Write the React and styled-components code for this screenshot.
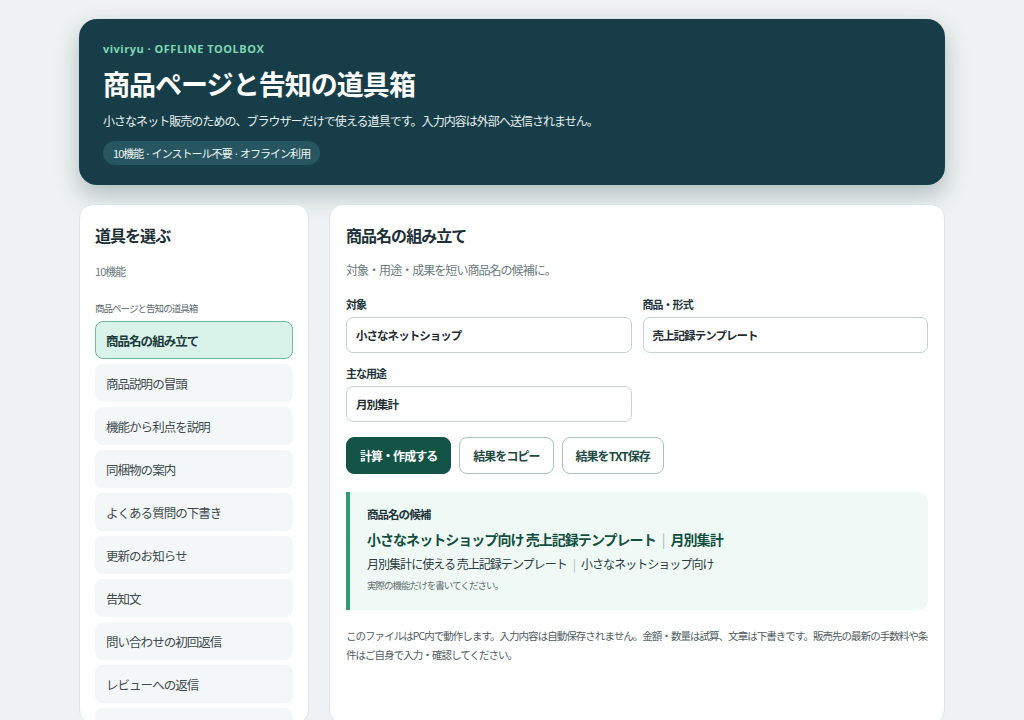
import React from "react";
import styled, { createGlobalStyle } from "styled-components";

const Global = createGlobalStyle`
  html, body { margin: 0; background: #eef2f2; }
  body { font-family: "Noto Sans CJK JP", "Noto Sans", sans-serif; color: #1f2d33; letter-spacing: -0.06em; }
  * { box-sizing: border-box; }
`;

const Page = styled.div`
  width: 866px; margin: 0 auto; padding: 19px 0 0;
  display: flex; flex-direction: column; gap: 19px;
`;
const Hero = styled.header`
  background: #173e48; border-radius: 18px; padding: 22px 24px 20px;
  box-shadow: 0 10px 24px rgba(20,50,60,0.28); color: #fff;
`;
const Eyebrow = styled.div`
  font-family: "Open Sans", sans-serif; font-weight: 700; font-size: 11px;
  letter-spacing: 0.5px; color: #7fd7b4;
`;
const Title = styled.h1`
  margin: 10px 0 0; font-size: 27px; font-weight: 700; line-height: 1.35;
`;
const Lead = styled.p`margin: 10px 0 0; font-size: 12px; color: #e6eff0;`;
const Pill = styled.span`
  display: inline-block; margin-top: 12px; background: #275660; color: #eef6f5;
  font-size: 11px; padding: 4px 10px; border-radius: 12px;
`;
const Body = styled.div`display: grid; grid-template-columns: 230px 1fr; gap: 20px;`;
const Card = styled.section`
  background: #fff; border: 1px solid #dde6e6; border-radius: 14px; height: 520px; overflow: hidden;
`;
const Side = styled(Card)`padding: 18px 15px;`;
const H2 = styled.h2`margin: 0; font-size: 16px; font-weight: 700; color: #1b2f36;`;
const Muted = styled.div`font-size: ${p => p.$fs || 11}px; color: #6c7a7e; margin-top: ${p => p.$mt}px;`;
const Group = styled.div`font-size: 9.5px; color: #5c6a6e; margin: 22px 0 6px;`;
const Nav = styled.div`display: flex; flex-direction: column; gap: 5px;`;
const Item = styled.div`
  height: 38px; border-radius: 8px; padding: 0 10px; display: flex; align-items: center;
  font-size: 12.5px; color: ${p => p.$on ? "#1b3a3a" : "#3e4b4f"}; font-weight: ${p => p.$on ? 700 : 400};
  background: ${p => p.$on ? "#d9f2ea" : "#f4f7f7"};
  border: 1px solid ${p => p.$on ? "#6cbca0" : "transparent"};
`;
const Main = styled(Card)`padding: 18px 16px;`;
const Fields = styled.div`display: grid; grid-template-columns: 1fr 1fr; gap: 12px 11px; margin-top: 18px;`;
const Field = styled.label`display: flex; flex-direction: column; gap: 5px;`;
const Label = styled.span`font-size: 11px; font-weight: 700; color: #22343a;`;
const Input = styled.div`
  height: 36px; border: 1px solid #c5d2d2; border-radius: 7px; padding: 0 9px;
  display: flex; align-items: center; font-size: 11.5px; font-weight: 700; color: #1f2d33;
`;
const Buttons = styled.div`display: flex; gap: 8px; margin-top: 15px;`;
const Btn = styled.button`
  height: 37px; padding: 0 13px; border-radius: 8px; font-family: inherit; letter-spacing: inherit;
  font-size: 12px; font-weight: 700;
  background: ${p => p.$primary ? "#145447" : "#fff"}; color: ${p => p.$primary ? "#fff" : "#1f4a44"};
  border: 1px solid ${p => p.$primary ? "#145447" : "#a9c3bd"};
`;
const Result = styled.div`
  margin-top: 18px; background: #effaf6; border-left: 4px solid #2e9a77; border-radius: 0 10px 10px 0;
  padding: 14px 17px 18px;
`;
const RTitle = styled.div`font-size: 11.5px; font-weight: 700; color: #22343a;`;
const RMain = styled.div`margin-top: 7px; font-size: 14px; font-weight: 700; color: #134f40;`;
const Sep = styled.span`color: #a8b8b4; font-weight: 400; margin: 0 6px;`;
const RSub = styled.div`margin-top: 6px; font-size: 12px; color: #2a3a3f;`;
const RNote = styled.div`margin-top: 6px; font-size: 9.5px; color: #5f6d70;`;
const Foot = styled.p`margin: 17px 0 0; font-size: 10.5px; line-height: 1.75; color: #4f5d61;`;

const items = ["商品名の組み立て","商品説明の冒頭","機能から利点を説明","同梱物の案内","よくある質問の下書き","更新のお知らせ","告知文","問い合わせの初回返信","レビューへの返信","文章のチェックリスト"];

export default function App() {
  return (
    <Page>
      <Global />
      <Hero>
        <Eyebrow>viviryu · OFFLINE TOOLBOX</Eyebrow>
        <Title>商品ページと告知の道具箱</Title>
        <Lead>小さなネット販売のための、ブラウザーだけで使える道具です。入力内容は外部へ送信されません。</Lead>
        <Pill>10機能 · インストール不要 · オフライン利用</Pill>
      </Hero>
      <Body>
        <Side>
          <H2>道具を選ぶ</H2>
          <Muted $mt={16}>10機能</Muted>
          <Group>商品ページと告知の道具箱</Group>
          <Nav>{items.map((t, i) => <Item key={t} $on={i === 0}>{t}</Item>)}</Nav>
        </Side>
        <Main>
          <H2>商品名の組み立て</H2>
          <Muted $mt={14} $fs={12}>対象・用途・成果を短い商品名の候補に。</Muted>
          <Fields>
            <Field><Label>対象</Label><Input>小さなネットショップ</Input></Field>
            <Field><Label>商品・形式</Label><Input>売上記録テンプレート</Input></Field>
            <Field><Label>主な用途</Label><Input>月別集計</Input></Field>
          </Fields>
          <Buttons>
            <Btn $primary>計算・作成する</Btn>
            <Btn>結果をコピー</Btn>
            <Btn>結果をTXT保存</Btn>
          </Buttons>
          <Result>
            <RTitle>商品名の候補</RTitle>
            <RMain>小さなネットショップ向け 売上記録テンプレート<Sep>|</Sep>月別集計</RMain>
            <RSub>月別集計に使える 売上記録テンプレート<Sep>|</Sep>小さなネットショップ向け</RSub>
            <RNote>実際の機能だけを書いてください。</RNote>
          </Result>
          <Foot>このファイルはPC内で動作します。入力内容は自動保存されません。金額・数量は試算、文章は下書きです。販売先の最新の手数料や条件はご自身で入力・確認してください。</Foot>
        </Main>
      </Body>
    </Page>
  );
}
